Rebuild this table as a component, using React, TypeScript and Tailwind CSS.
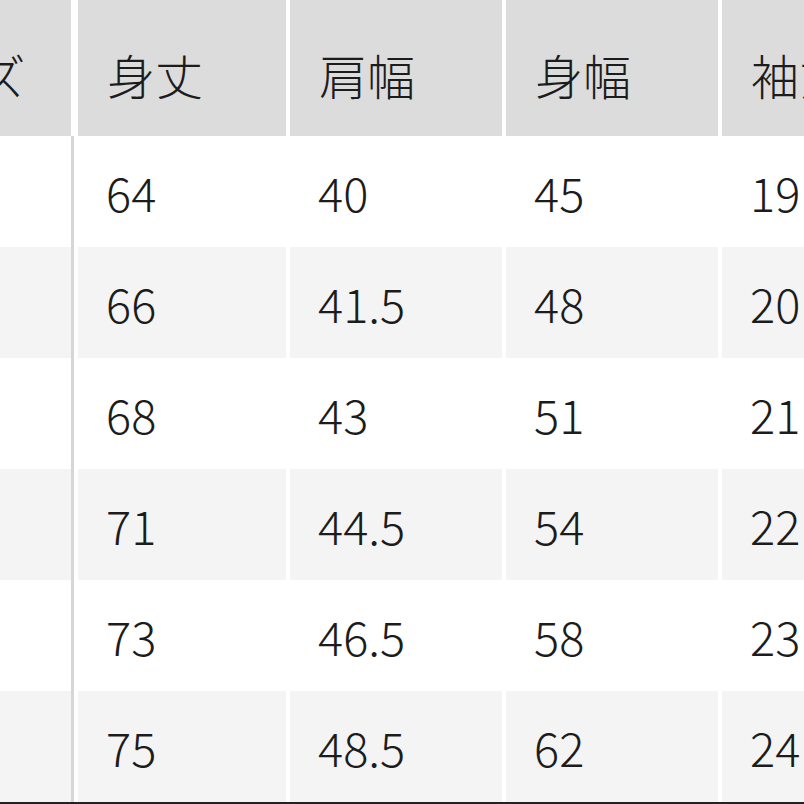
const headers = ["身丈", "肩幅", "身幅", "袖丈"];

const rows = [
  ["64", "40", "45", "19"],
  ["66", "41.5", "48", "20"],
  ["68", "43", "51", "21"],
  ["71", "44.5", "54", "22"],
  ["73", "46.5", "58", "23"],
  ["75", "48.5", "62", "24"],
];

const widths = ["w-[208px]", "w-[212px]", "w-[212px]", "w-[212px]"];

export default function App() {
  return (
    <div
      className="h-[804px] w-[804px] overflow-hidden bg-white text-[#1c1c1c]"
      style={{ fontFamily: '"Noto Sans CJK JP", "Noto Sans", sans-serif' }}
    >
      <div className="ml-[-145px] flex w-max flex-col">
        <div className="flex h-[136px]">
          <div className="flex w-[216px] shrink-0 items-center bg-[#dcdcdc] pl-[28px] pt-[12px] text-[48px] font-light leading-none">
            サイズ
          </div>
          <div className="w-[7px] shrink-0 bg-white" />
          {headers.map((h, i) => (
            <div
              key={h}
              className={`flex shrink-0 items-center bg-[#dcdcdc] pl-[29px] pt-[12px] text-[48px] font-light leading-none ${widths[i]} ${i > 0 ? "ml-[4px]" : ""}`}
            >
              {h}
            </div>
          ))}
        </div>
        {rows.map((r, ri) => {
          const bg = ri % 2 === 0 ? "bg-white" : "bg-[#f4f4f4]";
          return (
            <div key={ri} className="flex h-[111px]">
              <div className={`w-[216px] shrink-0 ${bg}`} />
              <div className="w-[3px] shrink-0 bg-[#d6d6d6]" />
              <div className="w-[4px] shrink-0 bg-white" />
              {r.map((v, i) => (
                <div
                  key={i}
                  className={`flex shrink-0 items-center pl-[28px] text-[47px] font-light leading-none ${bg} ${widths[i]} ${i > 0 ? "ml-[4px]" : ""}`}
                >
                  {v}
                </div>
              ))}
            </div>
          );
        })}
        <div className="h-[2px] bg-[#222222]" />
      </div>
    </div>
  );
}
